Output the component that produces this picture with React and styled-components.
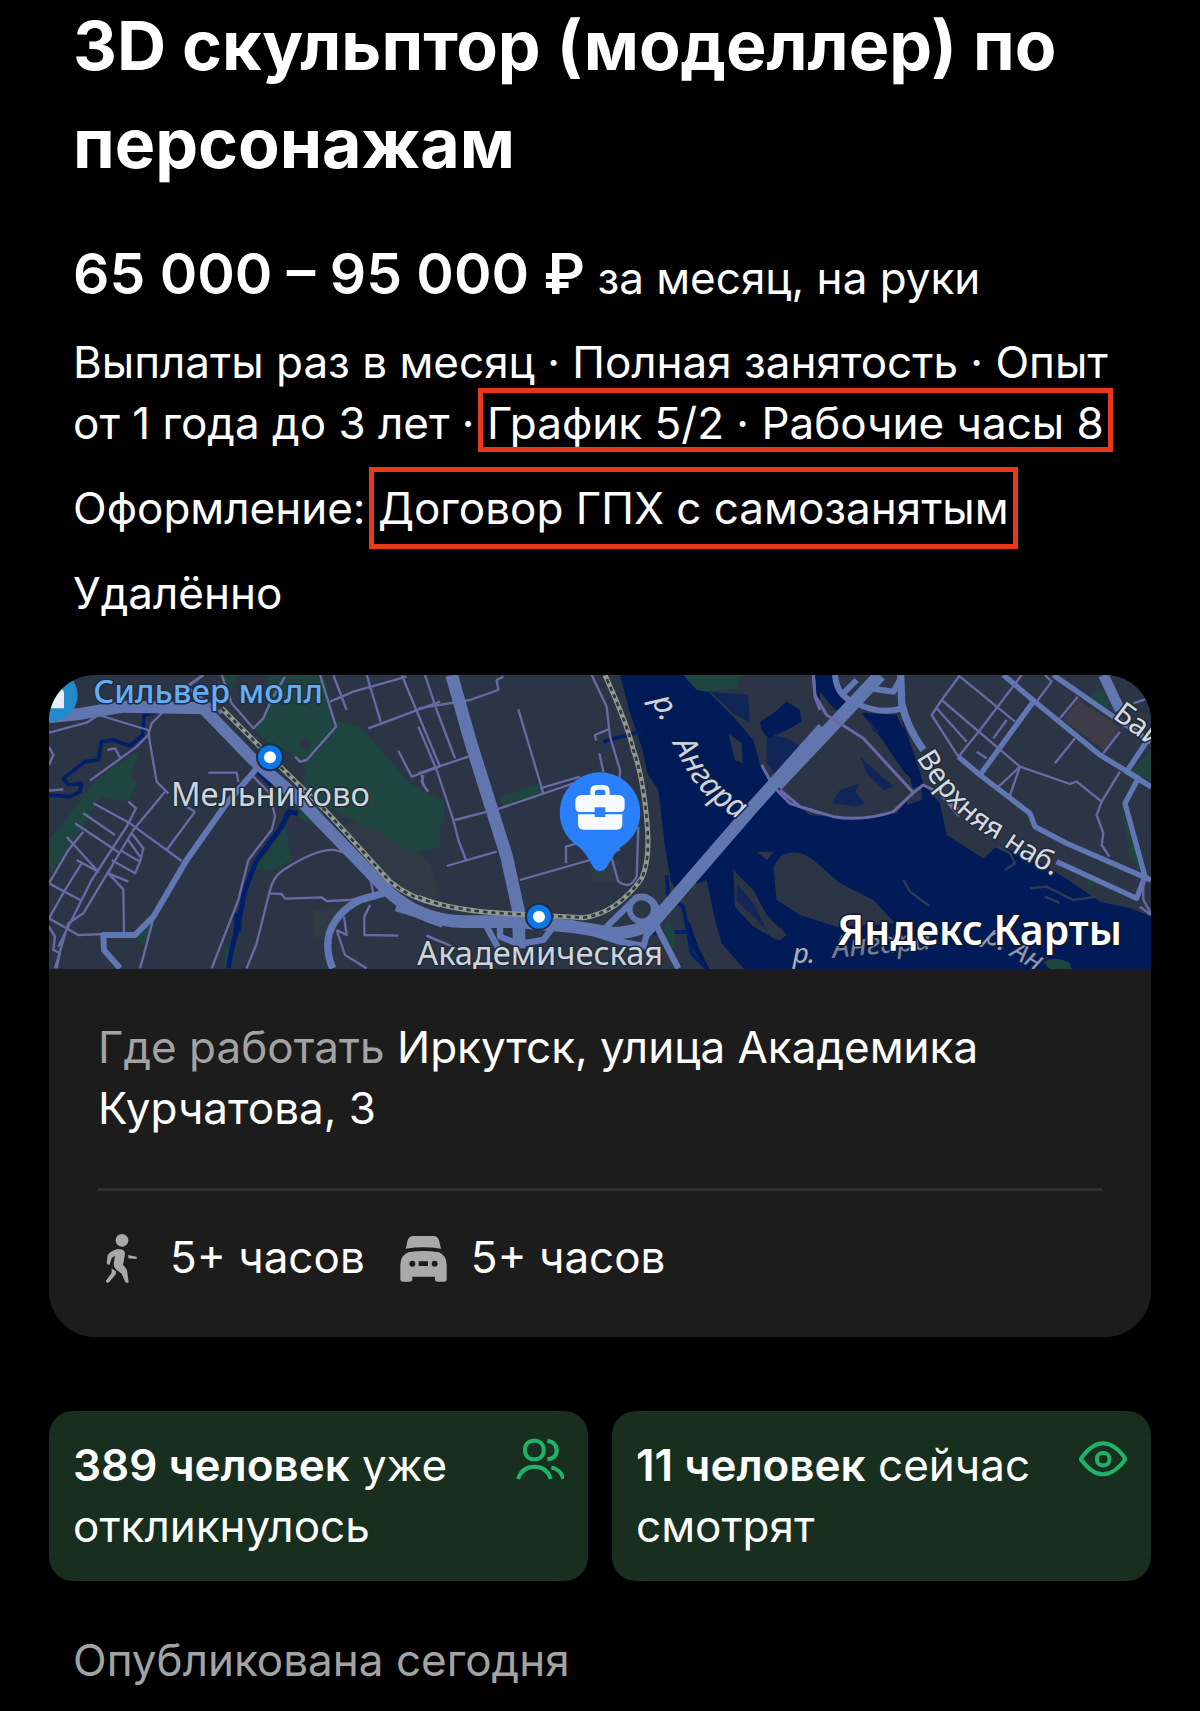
import React from "react";
import styled, { createGlobalStyle } from "styled-components";

const GlobalStyle = createGlobalStyle`
  *, *::before, *::after { box-sizing: border-box; }
  body {
    margin: 0;
    background: #000;
    color: #fff;
    font-family: Inter, "Liberation Sans", sans-serif;
    font-size: 44px;
    line-height: 61px;
  }
  h1, p { margin: 0; }
`;

const Page = styled.main`
  display: flex;
  flex-direction: column;
  padding: 0 49px 18px;
`;

const Summary = styled.header`
  display: flex;
  flex-direction: column;
  gap: 24px;
  padding: 0 24px;
`;

const Title = styled.h1`
  margin: -4px 0 24px;
  font-size: 68px;
  font-weight: 700;
  line-height: 98px;
`;

const Salary = styled.p`
  margin-bottom: -4px;
  line-height: 68px;
`;

const Amount = styled.strong`
  font-size: 57px;
  font-weight: 600;
`;

const Marked = styled.span`
  position: relative;
  white-space: nowrap;

  &::after {
    content: "";
    position: absolute;
    inset: ${(p) => (p.$roomy ? "-14px -9px" : "-8px -9px -2px")};
    border: 5px solid #e8391d;
  }
`;

const PlaceCard = styled.section`
  margin-top: 51px;
  border-radius: 46px;
  background: #1c1c1c;
  overflow: hidden;
`;

const MapView = styled.svg`
  display: block;
  width: 100%;
  height: 294px;
`;

const PlaceBody = styled.div`
  padding: 48px 49px 49px;
`;

const Address = styled.p`
  padding-bottom: 49px;
  border-bottom: 3px solid #303030;
`;

const Muted = styled.span`
  color: #a3a3a3;
`;

const Routes = styled.ul`
  display: flex;
  gap: 34px;
  margin: 0;
  padding: 36px 0 0;
  list-style: none;
`;

const Route = styled.li`
  display: flex;
  align-items: center;
  gap: 24px;
`;

const RouteIcon = styled.svg`
  width: 48px;
  height: 50px;
  fill: #a9a9a9;
`;

const Stats = styled.section`
  display: grid;
  grid-template-columns: 1fr 1fr;
  gap: 24px;
  margin-top: 74px;
`;

const StatCard = styled.div`
  display: flex;
  align-items: flex-start;
  justify-content: space-between;
  padding: 24px;
  border-radius: 24px;
  background: #182e1f;
`;

const StatText = styled.p`
  flex: 1;
`;

const Count = styled.strong`
  font-weight: 600;
`;

const StatIcon = styled.svg`
  flex: none;
  width: 48px;
  height: 48px;
  fill: none;
  stroke: #1fb369;
  stroke-width: 12;
`;

const Published = styled.p`
  margin-top: 49px;
  padding: 0 24px;
  color: #a3a3a3;
`;

const Shape = styled.path`
  fill: ${(p) => ({ land: "#2b3545", water: "#001b58", park: "#1f4541", pier: "#3f3c49", shoal: "#122557", yard: "#303a45" })[p.$kind]};
`;

const Line = styled.path`
  fill: none;
  stroke-linejoin: round;
  stroke: ${(p) => ({ main: "#6176ae", street: "#6177b4", lane: "#6a69a6", stream: "#001f6b", shore: "#2d3c52" })[p.$kind]};
  stroke-width: ${(p) => p.$w || { main: 36, street: 16, lane: 7, stream: 11, shore: 7 }[p.$kind]};
`;

const Rail = styled.path`
  fill: none;
  stroke: ${(p) => (p.$ties ? "#2f3a42" : "#92998f")};
  stroke-width: ${(p) => (p.$ties ? 8 : 15)};
  stroke-dasharray: ${(p) => (p.$ties ? "13 12" : "none")};
`;

const MapText = styled.text`
  font-family: "Noto Sans", sans-serif;
  font-size: ${(p) => p.$size || 98}px;
  font-weight: ${(p) => p.$weight || 400};
  font-style: ${(p) => (p.$river ? "italic" : "normal")};
  fill: ${(p) => p.$color || "#cfd4da"};
  stroke: ${(p) => p.$halo || "#222c3a"};
  stroke-width: 9px;
  stroke-linejoin: round;
  paint-order: stroke;
`;

const West = ({ children }) => <g transform="translate(-9 -15) scale(.33333)">{children}</g>;
const Center = ({ children }) => <g transform="translate(371 -15) scale(.33333)">{children}</g>;
const East = ({ children }) => <g transform="translate(731 -15) scale(.33333)">{children}</g>;

const Station = ({ x, y }) => (
  <g>
    <circle cx={x} cy={y} r="42" fill="#1d2c45" />
    <circle cx={x} cy={y} r="36" fill="#0a78e8" />
    <circle cx={x} cy={y} r="18" fill="#fff" />
  </g>
);

const railWest = "M545 145 L690 290 L860 455 L1050 665 Q1110 715 1200 735";
const railCenter = "M-5 712 Q100 755 290 762 L490 773 Q590 760 665 655 Q690 600 682 500 Q670 350 640 270 Q625 200 555 45";

function CityMap() {
  return (
    <MapView viewBox="0 0 1102 294" preserveAspectRatio="xMidYMid slice" role="img" aria-label="Карта">
      <rect width="1102" height="294" fill="#2b3545" />
      <West>
        <Shape $kind="yard" d="M960 480 L1150 590 L1200 700 L1200 740 L1040 660 L900 500Z M820 750 L900 740 L860 840 L820 840Z" />
        <Shape $kind="park" d="M680 45 L850 45 L885 180 L960 200 L1110 370 L1200 420 L1200 560 L1110 580 L1020 520 L920 470 L860 440 L830 500 L770 470 L800 330 L740 270 L690 250 L640 210 L690 130Z" />
        <Shape $kind="park" d="M300 270 L270 350 L292 370 L265 425 L180 410 L130 500 L60 600 L27 645 L27 540 L100 450 L150 380 L220 320Z" />
        <Shape $kind="park" d="M735 500 L755 600 L700 630 L640 625 L690 570Z M285 825 L340 775 L310 860Z M555 860 L590 860 L575 925 L552 925Z M545 45 L590 45 L570 100Z" />
        <Shape $kind="land" d="M780 245 L800 235 L815 255 L800 275 L780 265Z" />
        <Line $kind="stream" d="M370 150 L312 165 L308 225 L270 258 L220 240 L185 245 L175 300 L135 305 L70 355 L85 375 L125 370 L120 395 L90 410 L27 405" />
        <Line $kind="stream" d="M650 330 L695 375 M775 460 L745 455 L725 500 L650 600 L615 690 L595 790 L575 870 L565 925" $w={15} />
        <Line $kind="stream" d="M595 760 L593 815" $w={22} />
      </West>
      <Center>
        <Shape $kind="park" d="M-5 385 L70 420 L75 480 L0 570Z M240 410 L355 370 L365 405 L250 445Z" />
        <Shape $kind="yard" d="M-5 580 L30 610 L60 710 L0 700Z M510 610 L600 600 L590 670 L515 670Z" />
        <Shape $kind="water" d="M600 45 L2200 45 L2200 930 L860 930 L815 860 L790 750 L752 660 L735 560 L715 390 L682 340 L665 260 L630 160Z" />
        <Shape $kind="land" d="M790 45 L1450 45 L1450 240 L1480 400 L1430 460 L1290 475 L1170 465 L1090 405 L1020 315 L1000 240 L935 165 L865 95Z" />
        <Shape $kind="park" d="M790 45 L965 45 L950 85 L860 95 L830 90Z" />
        <Shape $kind="shoal" d="M870 95 L985 105 L990 190 L940 160Z M1040 230 Q1100 220 1140 260 L1130 310 L1070 350 L1040 310Z" />
        <Shape $kind="land" d="M925 220 L965 250 L968 310 L945 300Z" />
        <Shape $kind="water" d="M1020 185 L1060 160 L1100 125 L1140 150 L1145 185 L1110 205 L1090 215 L1045 235 L1025 210Z M1180 45 L1200 45 L1200 125 L1185 110Z" />
        <Shape $kind="land" d="M740 645 L770 690 L860 660 L885 780 L905 850 L975 930 L870 930 L835 860 L810 790 L755 730Z" />
        <Shape $kind="land" d="M940 630 L1000 690 L1040 765 L1100 825 L1075 842 L1000 800 L945 740Z M1010 575 L1062 575 L1040 600Z" />
        <Shape $kind="shoal" d="M950 670 L1000 730 L1040 810 L990 760 L950 720Z" />
        <Line $kind="stream" d="M550 245 L665 212 M740 645 L745 710 L790 740 L815 880 L860 925 M700 820 L800 815" />
        <Shape $kind="park" d="M740 780 L765 815 L765 860 L725 840Z" />
      </Center>
      <East>
        <Shape $kind="land" d="M0 590 Q50 560 100 600 L180 670 L280 720 L345 790 L170 800 L60 765 L-10 720 L-20 620Z M0 800 L20 825 L0 840Z" />
        <Shape $kind="water" d="M105 45 L162 45 L180 110 L225 150 L165 150 L120 95Z M245 158 L350 165 L385 240 L425 330 L415 370 L375 340 L300 230Z" />
        <Shape $kind="shoal" d="M240 290 L340 380 L310 390 L260 340Z M155 430 L180 390 L240 370 L225 395 L255 430 L230 440Z M260 170 L300 220 L280 215Z" />
        <Shape $kind="land" d="M350 45 L1140 45 L1140 780 L1050 745 L960 725 L850 650 L740 585 L650 560 L610 595 L500 525 L480 430 L430 370 L405 290 L360 160Z" />
        <Shape $kind="land" d="M380 385 L425 380 L425 420 L380 435Z M265 110 L360 90 L360 145 L280 140Z" />
        <Shape $kind="pier" d="M893 118 L1020 200 L980 275 L850 180Z" />
        <Shape $kind="park" d="M965 85 L1000 150 L920 115Z M1113 270 L1113 360 L1050 340Z M1020 430 L1080 600 L1075 640 L1050 580Z M925 650 L945 665 L920 690Z M790 905 Q830 885 870 910 L875 928 L810 928Z" />
        <Line $kind="shore" d="M650 560 L690 580 L705 610 L675 630 M370 660 L390 695 L448 738 M750 685 L800 680 L880 720 L950 710 M795 710 L838 728" />
      </East>

      <West>
        <Line $kind="lane" d="M27 218 L140 188 L175 165 L325 210 L330 250 L350 365 L385 400 M375 150 L335 190 L325 225 L290 260 L150 362 M202 270 L225 265 L240 292 M27 260 L40 285 L27 315 M27 392 L70 388" />
        <Line $kind="lane" d="M375 395 L280 510 L130 760 L85 790 L45 925 M160 430 L270 490 L425 603 M130 460 L225 525 M105 490 L240 580 M80 530 L175 635 L110 600 M265 425 L288 445 L260 500 L155 660 L55 860 M130 515 L85 570 L27 670 L125 722 M125 610 L75 690 L27 775 M465 455 L380 570 M440 440 L465 455 M275 520 L310 565 L300 605 L285 640 L215 600 M265 540 L300 590 M240 570 L300 605 M225 600 L205 640 L265 665 M205 640 L250 688 L252 820 L115 825 L27 775 M27 800 L45 830 L40 870 L60 880 L50 925" />
        <Line $kind="lane" d="M340 775 L310 890 L300 925 M505 338 L590 338 L595 365 M640 350 L690 400 L705 470 L695 510 L625 600 L595 720 L515 925 M620 925 L650 850 L690 690 Q700 650 730 630 Q830 565 885 570 L920 580 M685 700 L725 702 L735 716 L845 712 L860 723 L930 720 L1000 700 L990 655 M990 735 L973 770 L973 825 L1075 827 M890 810 L920 825 L912 770 M890 810 L915 885 L980 925 M1160 827 L1200 845" />
        <Line $kind="lane" d="M545 45 L575 130 L640 205 L670 175 L690 130 M840 45 L888 200 L800 300 L780 305 L765 290 M735 50 L700 110 M870 125 L940 95 L1100 50 M880 45 L920 150 M980 45 L1022 185 M985 205 L1200 125 M1085 45 L1200 320 M1075 272 L1115 350 L1200 320 M1150 345 L1145 365 L1162 393" />
        <Line $kind="main" d="M27 172 L110 163 L250 140 L490 145 L640 300 L780 420 L1040 690 Q1110 755 1210 785" />
        <Line $kind="street" d="M650 325 L560 430 L440 600 L340 770 L285 825 L190 825 L192 870 L240 925" $w={18} />
        <Line $kind="street" d="M1045 695 L960 720 Q890 755 868 820 Q855 870 878 925" $w={22} />
        <Line $kind="lane" d="M545 160 L440 80 L490 45" $w={9} />
      </West>
      <Center>
        <Line $kind="lane" d="M15 45 L50 150 L105 295 M-5 145 L150 120 L235 90 L230 60 L250 50 M-5 340 L40 325 L145 290 M-5 200 L50 330 L100 480 L115 540 L138 600 M5 345 L10 375 L25 395 M105 480 L240 445 L520 350 M80 618 L230 575 M295 148 L370 400 M360 385 L480 350 M515 45 L560 140 L570 230 L600 330 L598 380 M565 208 L525 225 L528 242 M538 280 L550 335 M300 660 L510 600 L600 568 M438 610 L438 560 L470 550 M575 595 L595 665 Q630 690 650 650 L655 500 M20 827 L110 865" />
        <Line $kind="lane" d="M1180 45 L1185 110 L1200 150 M1025 315 L1060 380 L1110 430 L1200 460" $w={9} />
        <Line $kind="main" d="M-70 735 L-5 755 Q60 785 140 785 L290 785 L460 800 L580 820 Q680 815 715 770 L1000 440 L1210 205" $w={38} />
        <Line $kind="main" d="M95 45 L150 240 L260 590 L295 750 L298 865" $w={38} />
        <Line $kind="street" d="M200 800 L235 865 M290 850 L240 830 L240 800 M310 850 L370 840 L400 800 M430 790 L600 845 L680 860 M720 770 Q700 700 650 712 L560 800 M700 780 L775 925 M670 860 L680 825 L715 790" $w={19} />
        <circle cx="665" cy="748" r="36" fill="none" stroke="#6176ae" strokeWidth="17" />
      </Center>
      <East>
        <Line $kind="main" d="M300 45 L150 205 L-10 375" $w={40} />
        <Line $kind="street" d="M165 45 Q170 110 230 130 Q300 165 365 145 M270 85 L340 95 L360 60 M190 100 L230 60" $w={18} />
        <Line $kind="lane" d="M100 45 L105 105 L140 165 L250 235 L400 398 L340 455 Q250 485 160 470 L60 440 L0 390 M400 398 L430 375 L480 400 L535 465 L540 450 L490 410" $w={9} />
        <Line $kind="street" d="M362 45 L365 130 Q380 200 430 270" $w={22} />
        <Line $kind="street" d="M535 290 L600 345 L750 460 L765 500 L860 550 L1113 660 M760 125 L600 345" />
        <Line $kind="street" d="M670 45 L765 125 L960 285 L1075 355 L1035 430 L1095 650 L1070 715 L830 605" />
        <Line $kind="street" d="M820 45 L1000 170 L1113 245 M1113 225 L1040 335 L1113 380" />
        <Line $kind="main" d="M970 45 L1020 150" $w={32} />
        <Line $kind="lane" d="M540 45 L485 120 L455 165 L535 290 L600 210 L725 45 M540 50 L705 185 M485 120 L720 320 L870 372 L890 365 L965 425 L950 465 L970 520 L965 555 L988 590 M470 145 L560 245 M795 45 L815 65 L770 125 M893 110 L840 175 M885 235 L825 310 M1020 215 L970 280 M1020 335 L965 425 M720 320 L650 385 M720 320 L690 405 M680 180 L640 235 M590 275 L620 295 M1060 130 L1095 118 M1090 660 L1090 720 L1113 760 M1080 740 L1113 765" />
      </East>
      <West><Rail d={railWest} /><Rail d={railWest} $ties /></West>
      <Center><Rail d={railCenter} /><Rail d={railCenter} $ties /></Center>

      <defs>
        <path id="angara" d="M694 120 Q750 240 800 330 Q860 440 1010 505" />
        <path id="embankment" d="M408 292 Q510 470 640 535 Q740 610 860 668" />
        <path id="baikal" d="M995 172 L1160 295" />
      </defs>
      <West>
        <circle cx="35" cy="105" r="78" fill="#2489c8" />
        <path d="M20 80 L60 80 L72 95 V145 H20Z" fill="#e6eef4" />
        <MapText x="160" y="129" $color="#63adf5" $weight={500}>Сильвер молл</MapText>
        <Station x="690" y="292" />
        <MapText x="393" y="438">Мельниково</MapText>
      </West>
      <Center>
        <Station x="357" y="770" />
        <MapText x="-8" y="916">Академическая</MapText>
        <MapText $river $size={94} $halo="#0b1d4a"><textPath href="#angara" startOffset="0">р.</textPath></MapText>
        <MapText $river $size={94} $halo="#0b1d4a"><textPath href="#angara" startOffset="145">Ангара</textPath></MapText>
        <path d="M540 337 A121 121 0 0 1 600 563 Q585 575 560 622 Q540 645 520 622 Q495 575 480 563 A121 121 0 0 1 540 337Z" fill="#2a80fb" />
        <path fillRule="evenodd" fill="#f8faff" d="M511 405 V394 Q511 375 530 375 H550 Q569 375 569 394 V405 H594 Q614 405 614 425 V442 Q614 456 600 456 H556 V442 H524 V456 H480 Q466 456 466 442 V425 Q466 405 486 405Z M525 405 H556 V396 Q556 389 549 389 H532 Q525 389 525 396Z M474 463 H524 V471 H556 V463 H607 V492 Q607 509 590 509 H491 Q474 509 474 492Z" />
      </Center>
      <East>
        <MapText $size={87} $color="#d5dae0"><textPath href="#embankment">Верхняя наб.</textPath></MapText>
        <MapText $size={90} $color="#d5dae0"><textPath href="#baikal">Бай</textPath></MapText>
        <MapText x="38" y="908" $river $size={84} $color="#a9b2c2" $halo="#0b1d4a">р.</MapText>
        <MapText x="160" y="893" $river $size={90} $color="#77829a" $halo="#0b1d4a" transform="rotate(-5 160 893)">Ангара</MapText>
        <MapText x="610" y="842" $river $size={84} $color="#8d98ab" $halo="#0b1d4a" transform="rotate(30 610 842)">р. Ан</MapText>
        <MapText x="172" y="856" $size={122} $weight={600} $color="#fff" $halo="#10182c">Яндекс Карты</MapText>
      </East>
    </MapView>
  );
}

const WalkIcon = () => (
  <RouteIcon viewBox="57 102 144 150" aria-hidden="true">
    <circle cx="129" cy="124" r="19" />
    <path d="M118 150 C105 152 92 160 86 168 L83 192 Q84 199 92 197 L98 177 L108 170 L104 195 Q103 204 112 212 L128 224 L139 249 Q144 254 149 250 L144 214 Q141 205 132 198 L138 165 Q138 150 118 150Z" />
    <path d="M148 168 L173 173 V180 L148 178Z" />
    <path d="M98 208 V222 L80 246 L85 252 L91 249 L110 226 L112 218Z" />
  </RouteIcon>
);

const CarIcon = () => (
  <RouteIcon viewBox="957 102 144 150" aria-hidden="true">
    <path d="M1000 111 H1060 Q1073 111 1077 124 L1083 149 Q1030 141 977 149 L983 124 Q987 111 1000 111Z" />
    <path fillRule="evenodd" d="M985 160 Q1030 152 1077 160 Q1100 170 1100 197 V240 Q1100 248 1092 248 H1073 Q1065 248 1065 240 V233 H997 V240 Q997 248 989 248 H969 Q961 248 961 240 V197 Q961 170 985 160Z M988 194 a9 9 0 1 0 18 0 a9 9 0 1 0 -18 0Z M1055 194 a9 9 0 1 0 18 0 a9 9 0 1 0 -18 0Z M1016 187 V201 H1044 V187Z" />
  </RouteIcon>
);

const PeopleIcon = () => (
  <StatIcon viewBox="72 81 144 144" aria-hidden="true">
    <rect x="99" y="98" width="56" height="56" rx="26" />
    <path d="M166 98 Q194 102 194 127 Q194 152 166 154 M78 213 Q90 176 127 176 Q166 176 176 213 M178 178 Q206 184 214 213" />
  </StatIcon>
);

const EyeIcon = () => (
  <StatIcon viewBox="84 81 144 144" aria-hidden="true">
    <path d="M89 153 Q122 106 156 106 Q191 106 224 153 Q191 199 156 199 Q122 199 89 153Z" />
    <rect x="138" y="135" width="37" height="37" rx="16" />
  </StatIcon>
);

export default function App() {
  return (
    <>
      <GlobalStyle />
      <Page>
        <Summary>
          <Title>3D скульптор (моделлер) по персонажам</Title>
          <Salary>
            <Amount>65 000 – 95 000 ₽</Amount> за месяц, на руки
          </Salary>
          <p>
            Выплаты раз в месяц · Полная занятость · Опыт от 1 года до 3 лет ·{" "}
            <Marked>График 5/2 · Рабочие часы 8</Marked>
          </p>
          <p>
            Оформление: <Marked $roomy>Договор ГПХ с самозанятым</Marked>
          </p>
          <p>Удалённо</p>
        </Summary>

        <PlaceCard>
          <CityMap />
          <PlaceBody>
            <Address>
              <Muted>Где работать</Muted> Иркутск, улица Академика Курчатова, 3
            </Address>
            <Routes>
              <Route><WalkIcon />5+ часов</Route>
              <Route><CarIcon />5+ часов</Route>
            </Routes>
          </PlaceBody>
        </PlaceCard>

        <Stats>
          <StatCard>
            <StatText><Count>389 человек</Count> уже откликнулось</StatText>
            <PeopleIcon />
          </StatCard>
          <StatCard>
            <StatText><Count>11 человек</Count> сейчас смотрят</StatText>
            <EyeIcon />
          </StatCard>
        </Stats>

        <Published>Опубликована сегодня</Published>
      </Page>
    </>
  );
}
